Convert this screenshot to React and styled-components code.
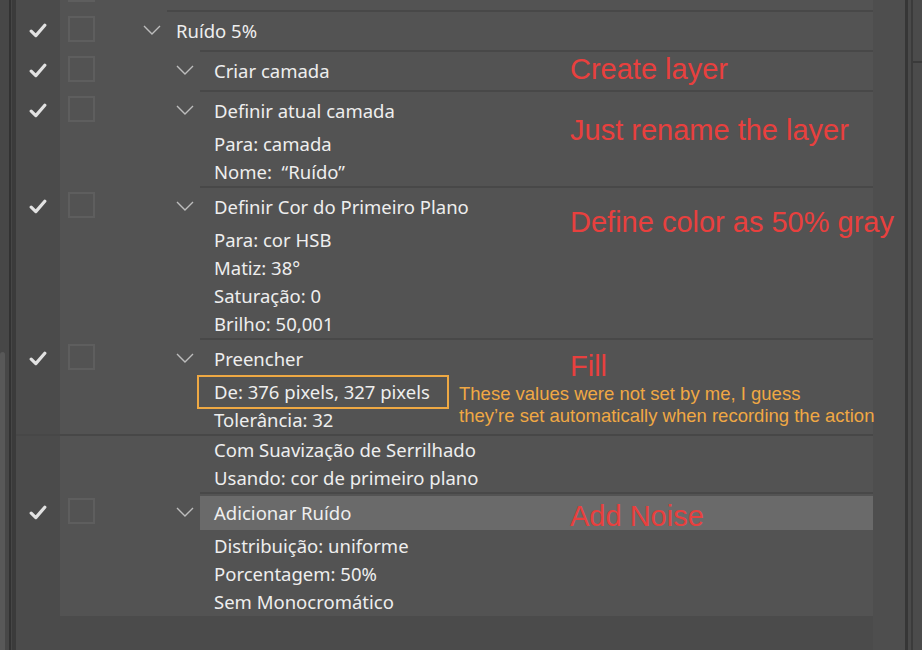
import React from 'react';
import styled, { createGlobalStyle } from 'styled-components';

const Global = createGlobalStyle`
  html, body { margin: 0; padding: 0; background: #4c4c4c; overflow: hidden; }
  #root { width: 922px; height: 650px; }
`;

const Frame = styled.div`
  display: flex;
  width: 922px;
  height: 650px;
  overflow: hidden;
  background: #4c4c4c;
  font-family: "Noto Sans", "Open Sans", sans-serif;
`;

const Edge = styled.div`
  display: flex;
  flex: 0 0 ${p => p.$w}px;
  height: 100%;
`;

const EdgeLine = styled.div`
  flex: 0 0 ${p => p.$w}px;
  background: ${p => p.$c};
`;

const Track = styled.div`
  flex: 0 0 9px;
  background: #474747;
  display: flex;
  flex-direction: column;
  padding-top: 352px;
  box-sizing: border-box;
`;

const Thumb = styled.div`
  flex: 1;
  width: 5px;
  background: #585858;
  border-radius: 3px 3px 0 0;
`;

const SidePanel = styled.div`
  flex: 1;
  display: flex;
  flex-direction: column;
  background: #4b4b4b;
`;

const SideBlock = styled.div`
  flex: 0 0 61px;
  border-bottom: 2px solid #3a3a3a;
`;

const Main = styled.div`
  flex: 1;
  min-width: 0;
  display: flex;
  flex-direction: column;
`;

const List = styled.div`
  display: flex;
  flex-direction: column;
  margin-top: -30px;
`;

const Footer = styled.div`
  flex: 1;
  background: #4b4b4b;
`;

const Row = styled.div`
  display: flex;
  background: #535353;
  border-top: ${p => (p.$seam ? '2px solid #474747' : 'none')};
`;

const Lead = styled.div`
  flex: 0 0 ${p => (p.$level === 0 ? 151 : 184)}px;
  display: flex;
  align-items: stretch;
`;

const CheckCell = styled.div`
  flex: 0 0 44px;
  background: #4b4b4b;
`;

const CheckSlot = styled.div`
  height: 40px;
  display: flex;
  align-items: center;
  justify-content: center;
`;

const Gutter = styled.div`
  flex: 1;
  height: 40px;
  display: flex;
  align-items: center;
  justify-content: space-between;
  padding: 0 6px 0 8px;
  box-sizing: border-box;
`;

const Box = styled.div`
  width: 27px;
  height: 26px;
  box-sizing: border-box;
  border: 2px solid #5e5e5e;
  margin-top: -2px;
`;

const Body = styled.div`
  flex: 1;
  position: relative;
  border-top: ${p => (p.$cont ? 'none' : '2px solid #484848')};
  color: #eeeeee;
  font-size: 18.5px;
`;

const Title = styled.div`
  height: ${p => (p.$active ? 34 : 38)}px;
  line-height: ${p => (p.$active ? 34 : 38)}px;
  margin: ${p => (p.$active ? '2px 0' : '0')};
  padding-left: ${p => (p.$level === 0 ? 9 : 14)}px;
  background: ${p => (p.$active ? '#6a6a6a' : 'transparent')};
  white-space: pre;
`;

const Param = styled.div`
  height: 28px;
  line-height: 28px;
  padding-left: 14px;
  padding-right: ${p => (p.$boxed ? 16 : 0)}px;
  width: fit-content;
  white-space: pre;
  outline: ${p => (p.$boxed ? '2px solid #eea843' : 'none')};
  outline-offset: 1px;
`;

const Note = styled.div`
  position: absolute;
  z-index: 2;
  left: ${p => p.$left}px;
  top: ${p => p.$top}px;
  font-family: "Liberation Sans", Arial, sans-serif;
  white-space: pre;
  pointer-events: none;
`;

const RedNote = styled(Note)`
  color: #e8403e;
  font-size: 29px;
  line-height: 34px;
`;

const OrangeNote = styled(Note)`
  color: #f0a844;
  font-size: 18.5px;
  line-height: 22px;
`;

const Check = () => (
  <svg width="18" height="15" viewBox="0 0 18 15">
    <path d="M2.2 8.2 L6.8 12.6 L15.8 2.2" fill="none" stroke="#e2e2e2" strokeWidth="3.2" strokeLinecap="round" strokeLinejoin="round" />
  </svg>
);

const Chevron = () => (
  <svg width="18" height="10" viewBox="0 0 18 10">
    <polyline points="1,1 9,9 17,1" fill="none" stroke="#bdbdbd" strokeWidth="1.4" />
  </svg>
);

const rows = [
  { level: 0, title: ' ', check: true },
  { level: 0, title: 'Ruído 5%', check: true },
  { level: 1, title: 'Criar camada', check: true, note: { text: 'Create layer', top: 0 } },
  {
    level: 1,
    title: 'Definir atual camada',
    check: true,
    params: ['Para: camada', 'Nome:  “Ruído”'],
    note: { text: 'Just rename the layer', top: 21 },
  },
  {
    level: 1,
    title: 'Definir Cor do Primeiro Plano',
    check: true,
    params: ['Para: cor HSB', 'Matiz: 38°', 'Saturação: 0', 'Brilho: 50,001'],
    note: { text: 'Define color as 50% gray', top: 17 },
  },
  {
    level: 1,
    title: 'Preencher',
    check: true,
    params: [{ text: 'De: 376 pixels, 327 pixels', boxed: true }, 'Tolerância: 32'],
    note: { text: 'Fill', top: 9 },
    aside: 'These values were not set by me, I guess\nthey’re set automatically when recording the action',
  },
  {
    level: 1,
    cont: true,
    params: ['Com Suavização de Serrilhado', 'Usando: cor de primeiro plano'],
  },
  {
    level: 1,
    title: 'Adicionar Ruído',
    check: true,
    active: true,
    params: ['Distribuição: uniforme', 'Porcentagem: 50%', 'Sem Monocromático'],
    note: { text: 'Add Noise', top: 5 },
  },
];

const ActionRow = ({ row }) => (
  <Row $seam={row.cont}>
    <Lead $level={row.level}>
      <CheckCell>
        {!row.cont && <CheckSlot>{row.check && <Check />}</CheckSlot>}
      </CheckCell>
      {row.cont ? (
        <Gutter />
      ) : (
        <Gutter>
          <Box />
          <Chevron />
        </Gutter>
      )}
    </Lead>
    <Body $cont={row.cont}>
      {!row.cont && (
        <Title $level={row.level} $active={row.active}>
          {row.title}
        </Title>
      )}
      {(row.params || []).map((p, i) => {
        const item = typeof p === 'string' ? { text: p } : p;
        return (
          <Param key={i} $boxed={item.boxed}>
            {item.text}
          </Param>
        );
      })}
      {row.note && (
        <RedNote $left={370} $top={row.note.top}>
          {row.note.text}
        </RedNote>
      )}
      {row.aside && (
        <OrangeNote $left={259} $top={43}>
          {row.aside}
        </OrangeNote>
      )}
    </Body>
  </Row>
);

export default function App() {
  return (
    <>
      <Global />
      <Frame>
        <Edge $w={16}>
          <Track>
            <Thumb />
          </Track>
          <EdgeLine $w={2} $c="#323232" />
          <EdgeLine $w={1} $c="#464646" />
          <EdgeLine $w={4} $c="#3b3b3b" />
        </Edge>
        <Main>
          <List>
            {rows.map((r, i) => (
              <ActionRow key={i} row={r} />
            ))}
          </List>
          <Footer />
        </Main>
        <Edge $w={49}>
          <EdgeLine $w={32} $c="#4e4e4e" />
          <EdgeLine $w={3} $c="#363636" />
          <EdgeLine $w={3} $c="#4a4a4a" />
          <EdgeLine $w={2} $c="#3b3b3b" />
          <SidePanel>
            <SideBlock />
          </SidePanel>
        </Edge>
      </Frame>
    </>
  );
}
